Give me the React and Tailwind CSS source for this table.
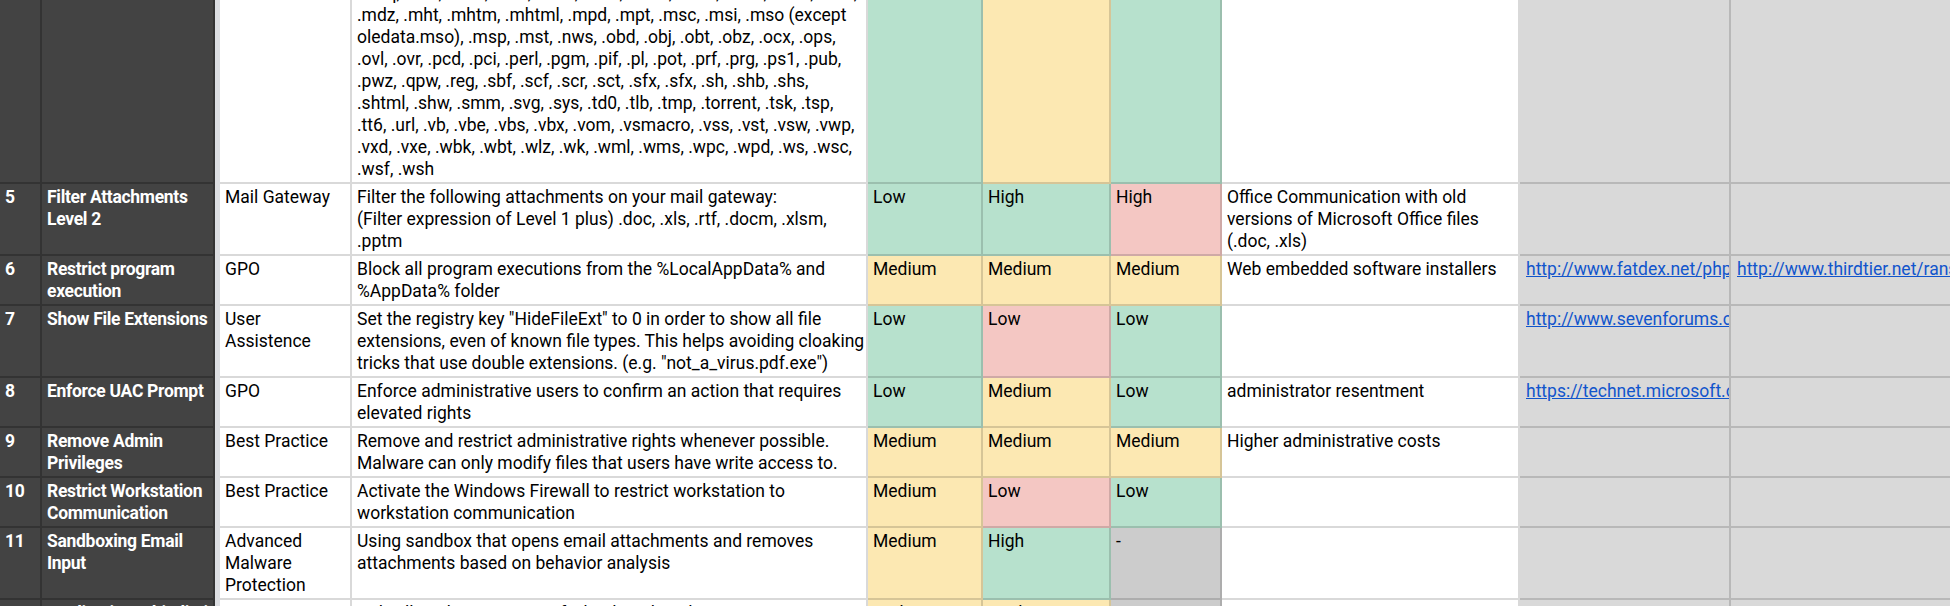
import React from 'react';

const fills = {
  g: 'bg-[#b7e1cd]',
  y: 'bg-[#fce8b2]',
  r: 'bg-[#f4c7c3]',
  x: 'bg-[#cccccc]',
  w: 'bg-white',
};

const rows = [
  {
    n: '',
    title: [],
    src: [],
    desc: [
      '.maq, .mar, .mas, .mat, .mau, .mav, .maw, .mda, .mdb, .mde, .mdt, .mdw,',
      '.mdz, .mht, .mhtm, .mhtml, .mpd, .mpt, .msc, .msi, .mso (except',
      'oledata.mso), .msp, .mst, .nws, .obd, .obj, .obt, .obz, .ocx, .ops,',
      '.ovl, .ovr, .pcd, .pci, .perl, .pgm, .pif, .pl, .pot, .prf, .prg, .ps1, .pub,',
      '.pwz, .qpw, .reg, .sbf, .scf, .scr, .sct, .sfx, .sfx, .sh, .shb, .shs,',
      '.shtml, .shw, .smm, .svg, .sys, .td0, .tlb, .tmp, .torrent, .tsk, .tsp,',
      '.tt6, .url, .vb, .vbe, .vbs, .vbx, .vom, .vsmacro, .vss, .vst, .vsw, .vwp,',
      '.vxd, .vxe, .wbk, .wbt, .wlz, .wk, .wml, .wms, .wpc, .wpd, .ws, .wsc,',
      '.wsf, .wsh',
    ],
    ratings: [['g', ''], ['y', ''], ['g', '']],
    note: [],
  },
  {
    n: '5',
    title: ['Filter Attachments', 'Level 2'],
    src: ['Mail Gateway'],
    desc: [
      'Filter the following attachments on your mail gateway:',
      '(Filter expression of Level 1 plus) .doc, .xls, .rtf, .docm, .xlsm,',
      '.pptm',
    ],
    ratings: [['g', 'Low'], ['g', 'High'], ['r', 'High']],
    note: ['Office Communication with old', 'versions of Microsoft Office files', '(.doc, .xls)'],
  },
  {
    n: '6',
    title: ['Restrict program', 'execution'],
    src: ['GPO'],
    desc: ['Block all program executions from the %LocalAppData% and', '%AppData% folder'],
    ratings: [['y', 'Medium'], ['y', 'Medium'], ['y', 'Medium']],
    note: ['Web embedded software installers'],
    link1: 'http://www.fatdex.net/php/2014/06/01/disable-exe-from-running-inside-any-user-appdata-directory-gpo/',
    link2: 'http://www.thirdtier.net/ransomware-prevention-kit/',
  },
  {
    n: '7',
    title: ['Show File Extensions'],
    src: ['User', 'Assistence'],
    desc: [
      'Set the registry key "HideFileExt" to 0 in order to show all file',
      'extensions, even of known file types. This helps avoiding cloaking',
      'tricks that use double extensions. (e.g. "not_a_virus.pdf.exe")',
    ],
    ratings: [['g', 'Low'], ['r', 'Low'], ['g', 'Low']],
    note: [],
    link1: 'http://www.sevenforums.com/tutorials/10570-file-extensions-hide-show.html',
  },
  {
    n: '8',
    title: ['Enforce UAC Prompt'],
    src: ['GPO'],
    desc: ['Enforce administrative users to confirm an action that requires', 'elevated rights'],
    ratings: [['g', 'Low'], ['y', 'Medium'], ['g', 'Low']],
    note: ['administrator resentment'],
    link1: 'https://technet.microsoft.com/en-us/library/dd835564(v=ws.10).aspx',
  },
  {
    n: '9',
    title: ['Remove Admin', 'Privileges'],
    src: ['Best Practice'],
    desc: [
      'Remove and restrict administrative rights whenever possible.',
      'Malware can only modify files that users have write access to.',
    ],
    ratings: [['y', 'Medium'], ['y', 'Medium'], ['y', 'Medium']],
    note: ['Higher administrative costs'],
  },
  {
    n: '10',
    title: ['Restrict Workstation', 'Communication'],
    src: ['Best Practice'],
    desc: ['Activate the Windows Firewall to restrict workstation to', 'workstation communication'],
    ratings: [['y', 'Medium'], ['r', 'Low'], ['g', 'Low']],
    note: [],
  },
  {
    n: '11',
    title: ['Sandboxing Email', 'Input'],
    src: ['Advanced', 'Malware', 'Protection'],
    desc: ['Using sandbox that opens email attachments and removes', 'attachments based on behavior analysis'],
    ratings: [['y', 'Medium'], ['g', 'High'], ['x', '-']],
    note: [],
  },
  {
    n: '12',
    title: ['Application Whitelisting'],
    src: ['Best Practice'],
    desc: ['Only allow the execution of whitelisted applications', 'and block everything else'],
    ratings: [['y', 'High'], ['y', 'Medium'], ['x', '-']],
    note: [],
  },
];

const Lines = ({ lines }) => lines.map((l, i) => <div key={i}>{l}</div>);

const cell = 'align-top px-[5px] pt-[2px] pb-[2px] border-r-2 border-b-2 whitespace-nowrap overflow-hidden';

export default function App() {
  return (
    <div className="w-[1950px] h-[606px] overflow-hidden bg-white">
      <table className="w-[1991px] -mt-[20px] table-fixed border-separate border-spacing-0 font-['Roboto',sans-serif] text-[17.5px] leading-[22px] text-black">
        <colgroup>
          <col className="w-[42px]" />
          <col className="w-[173px]" />
          <col className="w-[5px]" />
          <col className="w-[132px]" />
          <col className="w-[516px]" />
          <col className="w-[115px]" />
          <col className="w-[128px]" />
          <col className="w-[111px]" />
          <col className="w-[298px]" />
          <col className="w-[211px]" />
          <col className="w-[260px]" />
        </colgroup>
        <tbody>
          {rows.map((row, i) => (
            <tr key={i}>
              <td className={`${cell} bg-[#434343] border-[#333333] font-bold tracking-[-0.3px] text-white`}>{row.n}</td>
              <td className={`${cell} bg-[#434343] border-[#333333] font-bold tracking-[-0.3px] text-white`}>
                <Lines lines={row.title} />
              </td>
              <td className="p-0 bg-[#dcdee2]" />
              <td className={`${cell} bg-white border-black/15`}>
                <Lines lines={row.src} />
              </td>
              <td className={`${cell} bg-white border-black/15`}>
                <Lines lines={row.desc} />
              </td>
              {row.ratings.map(([c, t], j) => (
                <td key={j} className={`${cell} ${fills[c]} border-black/15`}>
                  {t}
                </td>
              ))}
              <td className={`${cell} bg-white border-black/15`}>
                <Lines lines={row.note} />
              </td>
              <td className={`${cell} bg-[#d9d9d9] border-black/15 pl-[6px]`}>
                {row.link1 && <a className="text-[#1155cc] underline">{row.link1}</a>}
              </td>
              <td className={`${cell} bg-[#d9d9d9] border-black/15 pl-[6px]`}>
                {row.link2 && <a className="text-[#1155cc] underline">{row.link2}</a>}
              </td>
            </tr>
          ))}
        </tbody>
      </table>
    </div>
  );
}
